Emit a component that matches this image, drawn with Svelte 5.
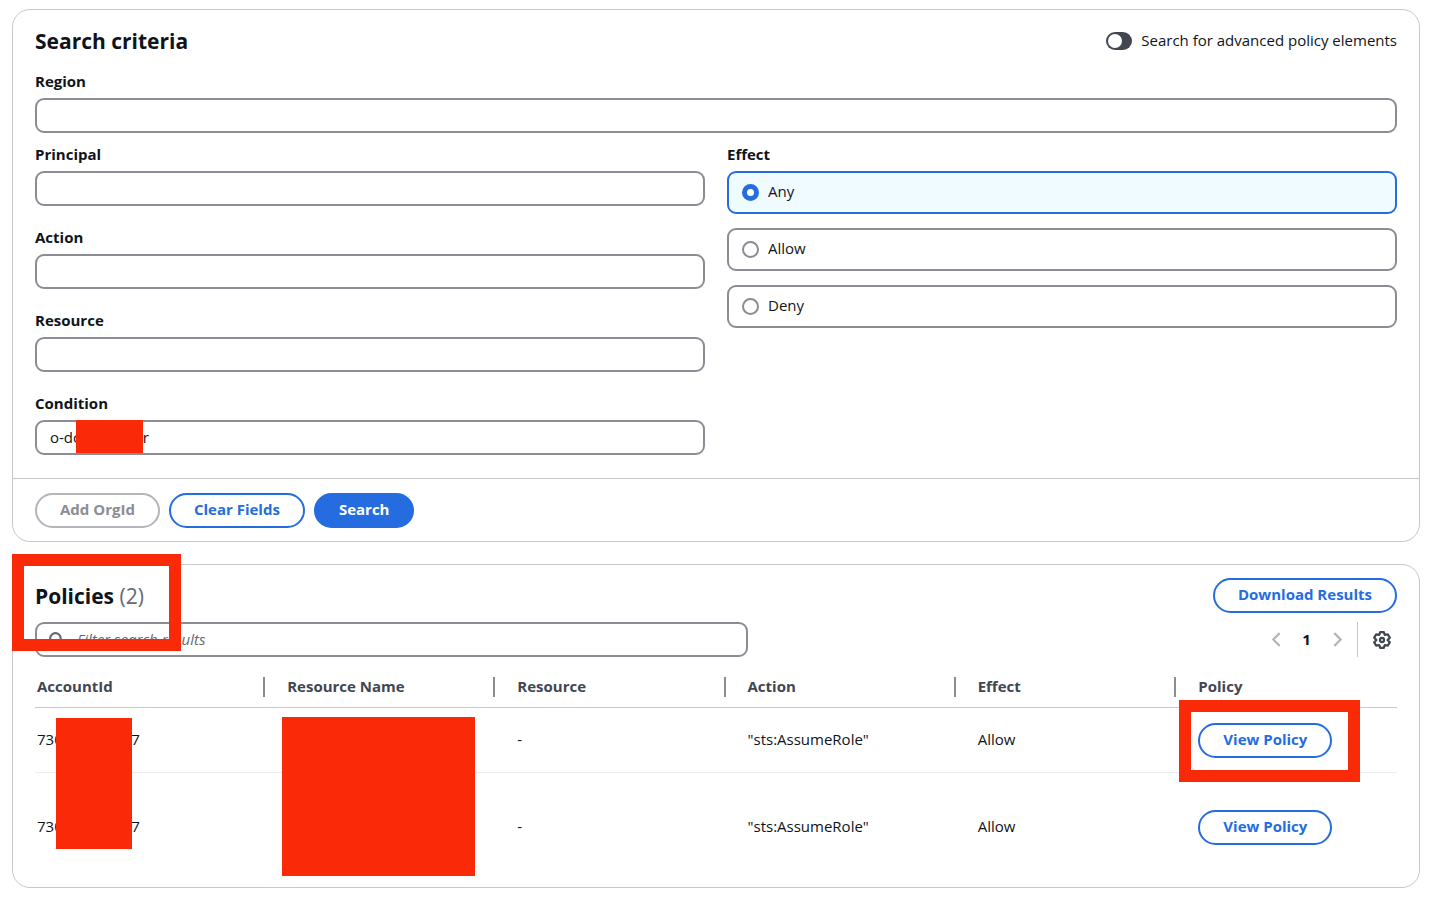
<script>
  const textFields = [
    { id: 'principal', label: 'Principal', value: '' },
    { id: 'action', label: 'Action', value: '' },
    { id: 'resource', label: 'Resource', value: '' },
    { id: 'condition', label: 'Condition', value: 'o-dcxxxxxxxyr', masked: true }
  ];

  const effects = ['Any', 'Allow', 'Deny'];
  const columns = ['AccountId', 'Resource Name', 'Resource', 'Action', 'Effect', 'Policy'];

  const policies = [
    { account: '730000000037', resource: '-', action: '"sts:AssumeRole"', effect: 'Allow' },
    { account: '730000000037', resource: '-', action: '"sts:AssumeRole"', effect: 'Allow' }
  ];

  let region = '';
  let advanced = false;
  let effect = 'Any';
  let filter = '';

  function clearFields() {
    region = '';
    effect = 'Any';
  }
</script>

<main class="page">
  <section class="card">
    <div class="card-header">
      <h2>Search criteria</h2>
      <label class="toggle">
        <input type="checkbox" role="switch" bind:checked={advanced} />
        <span>Search for advanced policy elements</span>
      </label>
    </div>

    <div class="field">
      <label for="region">Region</label>
      <input id="region" class="input" type="text" bind:value={region} />
    </div>

    <div class="criteria">
      <div class="fields">
        {#each textFields as field}
          <div class="field">
            <label for={field.id}>{field.label}</label>
            <div class="input-wrap">
              <input id={field.id} class="input" type="text" value={field.value} />
              {#if field.masked}<span class="mask mask-condition"></span>{/if}
            </div>
          </div>
        {/each}
      </div>

      <fieldset class="tiles">
        <legend>Effect</legend>
        <div class="tile-list">
          {#each effects as option}
            <label class="tile" class:selected={effect === option}>
              <input type="radio" name="effect" value={option} bind:group={effect} />
              <span>{option}</span>
            </label>
          {/each}
        </div>
      </fieldset>
    </div>

    <div class="card-footer">
      <button class="btn" disabled>Add OrgId</button>
      <button class="btn" on:click={clearFields}>Clear Fields</button>
      <button class="btn btn-primary">Search</button>
    </div>
  </section>

  <section class="card results">
    <div class="card-header">
      <h2>Policies <span class="count">({policies.length})</span></h2>
      <button class="btn">Download Results</button>
    </div>
    <span class="frame frame-title"></span>

    <div class="tools">
      <div class="search">
        <svg class="search-icon" viewBox="0 0 16 16" width="17" height="17" aria-hidden="true">
          <circle cx="7" cy="7" r="5" />
          <path d="M15 15l-4.5-4.5" />
        </svg>
        <input class="input" type="search" placeholder="Filter search results" aria-label="Filter search results" bind:value={filter} />
      </div>

      <div class="pagination">
        <button class="icon-btn" disabled aria-label="Previous page">
          <svg viewBox="0 0 16 16" width="17" height="17"><path d="M11 2L5 8l6 6" /></svg>
        </button>
        <button class="page-number">1</button>
        <button class="icon-btn" disabled aria-label="Next page">
          <svg viewBox="0 0 16 16" width="17" height="17"><path d="M5 2l6 6-6 6" /></svg>
        </button>
        <span class="divider"></span>
        <button class="icon-btn settings" aria-label="Preferences">
          <svg viewBox="0 0 16 16" width="18" height="18">
            <path d="M6.4 1h3.200l.85 2.500 2.800-.4L14.900 5.900 13 8l1.900 2.100-1.650 2.800-2.800-.4L9.600 15H6.400l-.85-2.500-2.800.4L1.100 10.100 3 8 1.100 5.900l1.650-2.800 2.800.4z" />
            <circle cx="8" cy="8" r="1.8" />
          </svg>
        </button>
      </div>
    </div>

    <div class="table-wrap">
      <table>
        <thead>
          <tr>
            {#each columns as column}
              <th scope="col">{column}</th>
            {/each}
          </tr>
        </thead>
        <tbody>
          {#each policies as policy, i}
            <tr>
              <td>{policy.account}</td>
              <td></td>
              <td>{policy.resource}</td>
              <td>{policy.action}</td>
              <td>{policy.effect}</td>
              <td>
                <span class="view">
                  <button class="btn">View Policy</button>
                  {#if i === 0}<span class="frame frame-view"></span>{/if}
                </span>
              </td>
            </tr>
          {/each}
        </tbody>
      </table>
      <span class="mask mask-account"></span>
      <span class="mask mask-name"></span>
    </div>
  </section>
</main>

<style>
  :global(body) {
    background: #fff;
  }

  .page {
    display: flex;
    flex-direction: column;
    gap: 22px;
    padding: 9px 21px 12px 12px;
    color: #0f141a;
    font-family: 'Open Sans', 'Noto Sans', sans-serif;
    font-size: 15px;
    line-height: 22px;
  }

  .page * {
    box-sizing: border-box;
  }

  .card {
    position: relative;
    padding: 0 22px;
    border: 1px solid #c6c6cd;
    border-radius: 18px;
  }

  .card-header {
    display: flex;
    justify-content: space-between;
    align-items: center;
    padding: 16px 0 14px;
  }

  .results .card-header {
    padding: 13px 0 9px;
  }

  h2 {
    margin: 0;
    font-size: 21px;
    font-weight: 700;
    line-height: 30px;
  }

  .count {
    color: #656871;
    font-weight: 400;
  }

  .toggle {
    display: flex;
    align-items: center;
    gap: 9px;
  }

  .toggle span,
  .tile span {
    padding-bottom: 3px;
  }

  .toggle input {
    appearance: none;
    display: flex;
    align-items: center;
    width: 26px;
    height: 18px;
    margin: 0;
    padding: 2px;
    border-radius: 9px;
    background: #424650;
  }

  .toggle input::before {
    content: '';
    width: 14px;
    height: 14px;
    border-radius: 50%;
    background: #fff;
  }

  .toggle input:checked {
    justify-content: flex-end;
    background: #256ce1;
  }

  .field {
    display: flex;
    flex-direction: column;
    gap: 6px;
  }

  .field > label,
  legend {
    font-weight: 700;
  }

  .input-wrap {
    position: relative;
  }

  .input {
    display: block;
    width: 100%;
    height: 35px;
    padding: 0 13px 2px;
    border: 2px solid #8c8c94;
    border-radius: 9px;
    background: #fff;
    color: inherit;
    font: inherit;
  }

  .criteria {
    display: grid;
    grid-template-columns: 1fr 1fr;
    gap: 22px;
    margin-top: 10px;
    padding-bottom: 23px;
  }

  .fields {
    display: flex;
    flex-direction: column;
    gap: 20px;
  }

  .tiles {
    min-width: 0;
    margin: 0;
    padding: 0;
    border: 0;
  }

  legend {
    padding: 0;
  }

  .tile-list {
    display: flex;
    flex-direction: column;
    gap: 14px;
    padding-top: 6px;
  }

  .tile {
    display: flex;
    align-items: center;
    gap: 9px;
    height: 43px;
    padding: 0 13px;
    border: 2px solid #8c8c94;
    border-radius: 9px;
  }

  .tile.selected {
    border-color: #256ce1;
    background: #f0fbff;
  }

  .tile input {
    appearance: none;
    width: 17px;
    height: 17px;
    margin: 0;
    border: 2px solid #8c8c94;
    border-radius: 50%;
    background: #fff;
  }

  .tile input:checked {
    border: 5px solid #256ce1;
  }

  .card-footer {
    display: flex;
    gap: 9px;
    margin: 0 -22px;
    padding: 14px 22px 13px;
    border-top: 1px solid #c6c6cd;
  }

  .btn {
    height: 35px;
    padding: 0 23px 3px;
    border: 2px solid #256ce1;
    border-radius: 18px;
    background: #fff;
    color: #256ce1;
    font: inherit;
    font-weight: 700;
    white-space: nowrap;
    cursor: pointer;
  }

  .btn:disabled {
    border-color: #b4b4bb;
    color: #8c8c94;
    cursor: default;
  }

  .btn-primary {
    background: #256ce1;
    color: #fff;
  }

  .tools {
    display: flex;
    justify-content: space-between;
    align-items: center;
  }

  .search {
    position: relative;
    flex: 0 1 713px;
  }

  .search .input {
    padding-left: 40px;
  }

  .search .input::placeholder {
    color: #656871;
    font-style: italic;
    opacity: 1;
  }

  .search-icon {
    position: absolute;
    top: 9px;
    left: 13px;
    fill: none;
    stroke: #656871;
    stroke-width: 2;
  }

  .pagination {
    display: flex;
    align-items: center;
  }

  .icon-btn,
  .page-number {
    display: flex;
    justify-content: center;
    align-items: center;
    height: 35px;
    padding: 0;
    border: 0;
    background: none;
    color: inherit;
    font: inherit;
  }

  .icon-btn {
    width: 30px;
  }

  .icon-btn svg {
    fill: none;
    stroke: #b4b4bb;
    stroke-width: 2;
  }

  .page-number {
    width: 31px;
    padding-bottom: 2px;
    font-weight: 700;
  }

  .icon-btn.settings svg {
    stroke: #424650;
    stroke-linejoin: round;
  }

  .divider {
    width: 1px;
    height: 35px;
    margin: 0 9px 0 5px;
    background: #c6c6cd;
  }

  .table-wrap {
    position: relative;
    margin-top: 9px;
    padding-bottom: 6px;
  }

  table {
    width: 100%;
    border-collapse: separate;
    border-spacing: 0;
    table-layout: fixed;
  }

  th,
  td {
    padding: 0 22px 2px;
    text-align: left;
  }

  th:first-child,
  td:first-child {
    padding-left: 2px;
  }

  th {
    position: relative;
    width: 16.9%;
    height: 42px;
    border-bottom: 1px solid #c6c6cd;
    color: #424650;
  }

  th:nth-last-child(-n + 2) {
    width: 16.2%;
  }

  th:not(:last-child)::after {
    content: '';
    position: absolute;
    top: 11px;
    right: 0;
    width: 2px;
    height: 20px;
    background: #8c8c94;
  }

  td {
    height: 65px;
    border-bottom: 1px solid #ebebf0;
  }

  tr:last-child td {
    height: 108px;
    border-bottom: 0;
  }

  th:last-child,
  td:last-child {
    padding-right: 0;
  }

  td:last-child {
    padding-bottom: 0;
  }

  .view {
    position: relative;
    display: inline-block;
  }

  .mask {
    position: absolute;
    background: #fa2a08;
  }

  .mask-condition {
    top: 0;
    left: 41px;
    width: 67px;
    height: 33px;
  }

  .mask-account {
    top: 52px;
    left: 21px;
    width: 76px;
    height: 131px;
  }

  .mask-name {
    top: 51px;
    left: 247px;
    width: 193px;
    height: 159px;
  }

  .frame {
    position: absolute;
    border: 12px solid #fa2a08;
    pointer-events: none;
  }

  .frame-title {
    z-index: 1;
    top: -11px;
    left: -1px;
    width: 169px;
    height: 97px;
  }

  .frame-view {
    top: -23px;
    right: -28px;
    bottom: -24px;
    left: -19px;
  }
</style>
